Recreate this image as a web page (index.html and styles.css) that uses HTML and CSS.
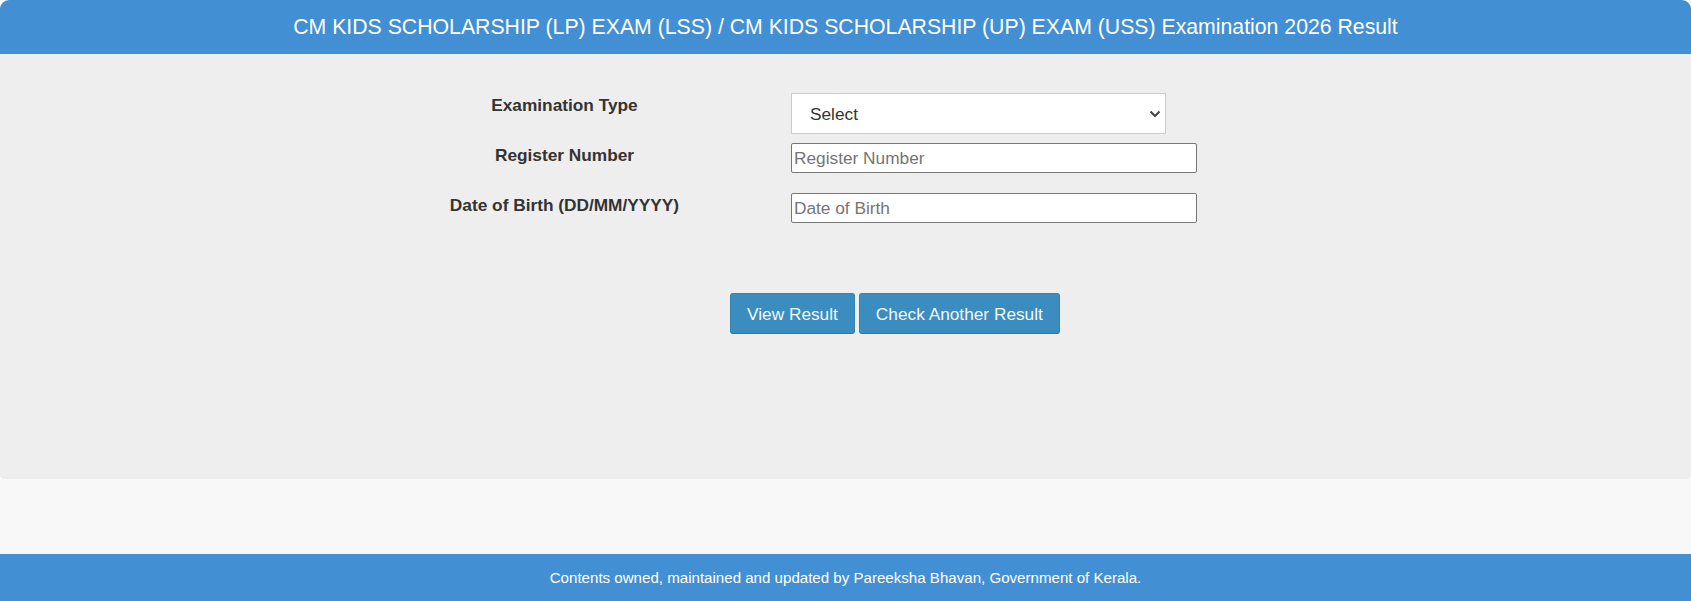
FILE: index.html
```html
<!DOCTYPE html>
<html lang="en">
<head>
<meta charset="utf-8">
<title>CM KIDS SCHOLARSHIP Examination 2026 Result</title>
<link rel="stylesheet" href="styles.css">
</head>
<body>
<header class="site-header">CM KIDS SCHOLARSHIP (LP) EXAM (LSS) / CM KIDS SCHOLARSHIP (UP) EXAM (USS) Examination 2026 Result</header>
<main class="panel">
  <form class="result-form">
    <div class="form-grid">
      <label class="field-label" for="examType">Examination Type</label>
      <div class="field">
        <div class="select-wrap">
          <select id="examType" class="select-box">
            <option>Select</option>
            <option>LSS</option>
            <option>USS</option>
          </select>
          <svg class="select-arrow" width="12" height="8" viewBox="0 0 12 8" aria-hidden="true"><path d="M1.5 1.5 L6 6 L10.5 1.5" fill="none" stroke="#444" stroke-width="2"/></svg>
        </div>
      </div>
      <label class="field-label" for="regNo">Register Number</label>
      <div class="field"><input id="regNo" class="text-input" type="text" placeholder="Register Number"></div>
      <label class="field-label" for="dob">Date of Birth (DD/MM/YYYY)</label>
      <div class="field"><input id="dob" class="text-input" type="text" placeholder="Date of Birth"></div>
    </div>
    <div class="actions">
      <button type="button" class="btn">View Result</button>
      <button type="button" class="btn">Check Another Result</button>
    </div>
  </form>
</main>
<div class="spacer"></div>
<footer class="site-footer">Contents owned, maintained and updated by Pareeksha Bhavan, Government of Kerala.</footer>
</body>
</html>
```

FILE: styles.css
```css
html, body {
  margin: 0;
  padding: 0;
  background: #ffffff;
  font-family: "Liberation Sans", Arial, sans-serif;
}

.site-header {
  height: 54px;
  line-height: 54px;
  background: #438fd3;
  color: #ffffff;
  text-align: center;
  font-size: 21.25px;
  border-radius: 9px 9px 0 0;
  white-space: nowrap;
}

.panel {
  display: block;
  height: 425px;
  box-sizing: border-box;
  background: #eeeeee;
  padding-top: 39px;
  border-radius: 0 0 4px 4px;
}

.form-grid {
  display: grid;
  grid-template-columns: 453px 406px;
  grid-auto-rows: 50px;
  margin-left: 338px;
}

.field-label {
  font-weight: bold;
  font-size: 17.28px;
  line-height: 20px;
  color: #333333;
  text-align: center;
  padding-top: 1.5px;
}

.select-wrap {
  position: relative;
  width: 375px;
  height: 41px;
}

.select-box {
  appearance: none;
  -webkit-appearance: none;
  width: 375px;
  height: 41px;
  box-sizing: border-box;
  margin: 0;
  border: 1px solid #cccccc;
  border-radius: 0;
  background: #ffffff;
  padding: 0 30px 0 18px;
  font-family: "Liberation Sans", Arial, sans-serif;
  font-size: 17.28px;
  color: #333333;
  outline: none;
}

.select-arrow {
  position: absolute;
  right: 5px;
  top: 17px;
  pointer-events: none;
}

.text-input {
  display: block;
  width: 406px;
  height: 30px;
  box-sizing: border-box;
  margin: 0;
  border: 1px solid #767676;
  border-radius: 2px;
  background: #ffffff;
  padding: 0 2px;
  font-family: "Liberation Sans", Arial, sans-serif;
  font-size: 17.28px;
  color: #333333;
  outline: none;
}

.text-input::placeholder {
  color: #757575;
  opacity: 1;
}

.actions {
  display: flex;
  gap: 4px;
  margin-top: 50px;
  margin-left: 730px;
}

.btn {
  height: 41px;
  box-sizing: border-box;
  padding: 0 16px;
  margin: 0;
  background: #3a8dbe;
  border: 1px solid #3585b4;
  border-bottom-color: #2f78a3;
  border-radius: 3px;
  color: #f4f8fb;
  font-family: "Liberation Sans", Arial, sans-serif;
  font-size: 17.28px;
  line-height: 20px;
  cursor: pointer;
}

.spacer {
  height: 75px;
  background: #f8f8f8;
}

.site-footer {
  height: 47px;
  line-height: 47px;
  background: #438fd3;
  color: #ffffff;
  text-align: center;
  font-size: 15.1px;
}
```
